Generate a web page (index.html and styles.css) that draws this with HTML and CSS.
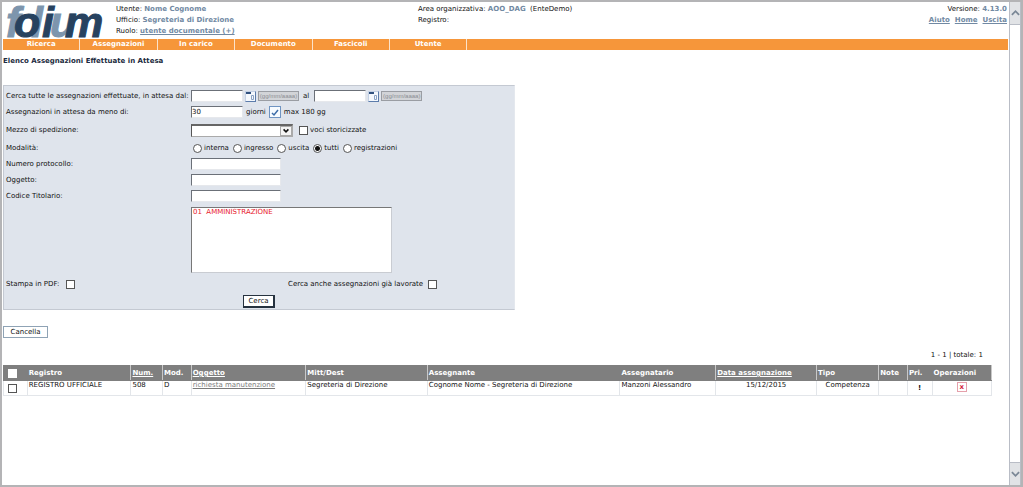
FILE: index.html
```html
<!DOCTYPE html>
<html lang="it">
<head>
<meta charset="utf-8">
<title>Elenco Assegnazioni Effettuate in Attesa</title>
<link rel="stylesheet" href="styles.css">
</head>
<body>
<div class="frame">
<div class="page">
  <header class="header">
    <svg class="logo" viewBox="0 0 101 34" role="img" aria-label="folium">
      <g class="logo-back"><text x="3" y="33">f</text><text x="28" y="33">l</text><text x="47" y="33">u</text></g>
      <g class="logo-front"><text x="11" y="33">o</text><text x="39" y="33">i</text><text x="62" y="33">m</text></g>
    </svg>
    <div class="user">
      <div>Utente: <b>Nome Cognome</b></div>
      <div>Ufficio: <b>Segreteria di Direzione</b></div>
      <div>Ruolo: <a href="#">utente documentale (+)</a></div>
    </div>
    <div class="area">
      <div>Area organizzativa: <b>AOO_DAG</b>&nbsp; (EnteDemo)</div>
      <div>Registro:</div>
    </div>
    <div class="version">
      <div>Versione: <b>4.13.0</b></div>
      <div class="links"><a href="#">Aiuto</a><a href="#">Home</a><a href="#">Uscita</a></div>
    </div>
  </header>
  <nav class="nav">
    <a href="#">Ricerca</a><a href="#">Assegnazioni</a><a href="#">In carico</a><a href="#">Documento</a><a href="#">Fascicoli</a><a href="#">Utente</a>
  </nav>
  <h1 class="title">Elenco Assegnazioni Effettuate in Attesa</h1>

  <form class="panel">
    <div class="row first">
      <label for="dal">Cerca tutte le assegnazioni effettuate, in attesa dal:</label>
      <div class="fields dates">
        <input class="field short" id="dal" type="text">
        <button class="cal" type="button" aria-label="Calendario"><svg viewBox="0 0 9 9"><path class="cal-bar" d="M0 0h5v2h-5z"/><path class="cal-day" d="M5.500 3.500h2v4h-2z"/></svg></button>
        <span class="hint">(gg/mm/aaaa)</span>
        <label class="to" for="al">al</label>
        <input class="field short" id="al" type="text">
        <button class="cal" type="button" aria-label="Calendario"><svg viewBox="0 0 9 9"><path class="cal-bar" d="M0 0h5v2h-5z"/><path class="cal-day" d="M5.500 3.500h2v4h-2z"/></svg></button>
        <span class="hint">(gg/mm/aaaa)</span>
      </div>
    </div>
    <div class="row">
      <label for="giorni">Assegnazioni in attesa da meno di:</label>
      <div class="fields days">
        <input class="field short" id="giorni" type="text" value="30">
        <span>giorni</span>
        <button class="confirm" type="button" aria-label="Conferma"><svg viewBox="0 0 10 10"><path d="M2 6l2 2L8 3"/></svg></button>
        <span>max 180 gg</span>
      </div>
    </div>
    <div class="row tall">
      <label for="mezzo">Mezzo di spedizione:</label>
      <div class="fields">
        <div class="drop"><select id="mezzo"><option></option></select><svg viewBox="0 0 12 10"><path d="M3 3l3 3 3-3"/></svg></div>
        <label class="choice"><input type="checkbox">voci storicizzate</label>
      </div>
    </div>
    <div class="row" role="radiogroup" aria-labelledby="modalita">
      <span id="modalita">Modalità:</span>
      <div class="fields radios">
        <label class="choice"><input type="radio" name="mod">interna</label>
        <label class="choice"><input type="radio" name="mod">ingresso</label>
        <label class="choice"><input type="radio" name="mod">uscita</label>
        <label class="choice"><input type="radio" name="mod" checked>tutti</label>
        <label class="choice"><input type="radio" name="mod">registrazioni</label>
      </div>
    </div>
    <div class="row"><label for="numero">Numero protocollo:</label><div class="fields"><input class="field" id="numero" type="text"></div></div>
    <div class="row"><label for="oggetto">Oggetto:</label><div class="fields"><input class="field" id="oggetto" type="text"></div></div>
    <div class="row"><label for="codice">Codice Titolario:</label><div class="fields"><input class="field" id="codice" type="text"></div></div>
    <div class="row list">
      <span></span>
      <select class="listbox" size="5" aria-label="Titolario"><option>01&nbsp; AMMINISTRAZIONE</option></select>
    </div>
    <div class="extras">
      <label>Stampa in PDF:<input type="checkbox"></label>
      <label>Cerca anche assegnazioni già lavorate<input type="checkbox"></label>
    </div>
    <div class="submit"><button class="search" type="submit">Cerca</button></div>
  </form>

  <button class="cancel" type="button">Cancella</button>

  <div class="results">
    <p class="count">1 - 1 | totale: 1</p>
    <table>
      <colgroup><col class="c-check"><col class="c-reg"><col class="c-num"><col class="c-mod"><col class="c-ogg"><col class="c-mitt"><col class="c-from"><col class="c-to"><col class="c-date"><col class="c-tipo"><col class="c-note"><col class="c-pri"><col class="c-op"></colgroup>
      <thead><tr>
        <th><input type="checkbox" aria-label="Seleziona tutto"></th><th>Registro</th><th><a href="#">Num.</a></th><th>Mod.</th><th><a href="#">Oggetto</a></th><th>Mitt/Dest</th><th>Assegnante</th><th>Assegnatario</th><th><a href="#">Data assegnazione</a></th><th>Tipo</th><th>Note</th><th>Pri.</th><th>Operazioni</th>
      </tr></thead>
      <tbody><tr>
        <td><input type="checkbox" aria-label="Seleziona riga"></td><td>REGISTRO UFFICIALE</td><td>508</td><td>D</td><td><a href="#">richiesta manutenzione</a></td><td>Segreteria di Direzione</td><td>Cognome Nome - Segreteria di Direzione</td><td>Manzoni Alessandro</td><td class="mid">15/12/2015</td><td class="mid">Competenza</td><td></td><td class="mid pri">!</td><td class="mid"><button class="delete" type="button">x</button></td>
      </tr></tbody>
    </table>
  </div>
</div>
<div class="scroll">
  <button type="button" aria-label="Su"><svg viewBox="0 0 10 8"><path d="M1 6l4-4 4 4"/></svg></button>
  <button type="button" aria-label="Giù"><svg viewBox="0 0 10 8"><path d="M1 2l4 4 4-4"/></svg></button>
</div>
</div>
</body>
</html>
```
FILE: styles.css
```css
* { box-sizing: border-box; }
body {
  margin: 0;
  font: 7px/11px "DejaVu Sans", Verdana, sans-serif;
  color: #111;
  background: #fff;
}
button, input, select { font: inherit; color: inherit; margin: 0; padding: 0; border-radius: 0; }
button svg { display: block; }
.frame {
  display: flex;
  min-height: 100vh;
  border: 2px solid #b4b4b6;
}
.page { flex: 1; min-width: 0; padding: 2px 1px; }

.header { display: flex; align-items: flex-start; height: 35px; }
.header a, .header b { color: #7189a3; font-weight: bold; }
.logo { width: 101px; height: 34px; flex: none; overflow: visible; }
.logo text { font: italic bold 43px "Liberation Sans", Arial, sans-serif; stroke-width: 1; }
.logo-back { fill: #7d95ad; stroke: #7d95ad; }
.logo-front { fill: #27425f; stroke: #27425f; }
.user { width: 314px; padding-left: 12px; }
.area { flex: 1; }
.version { text-align: right; padding-right: 1px; }
.links { display: flex; gap: 5px; justify-content: flex-end; }

.nav { display: flex; height: 11px; background: #f6963a; }
.nav a {
  flex: 0 0 7.7%;
  border-right: 1px solid #fbe3cb;
  color: #fff;
  font-weight: bold;
  text-align: center;
  text-decoration: none;
}
.title { margin: 6px 0 18px; font-size: 7px; line-height: 11px; color: #1c2b40; }

.panel {
  width: 51%;
  max-width: 512px;
  padding: 2px 2px 1px;
  border: 1px solid #c4c9d2;
  border-right-color: #e4e8ee;
  background: #dfe4ec;
}
.row { display: grid; grid-template-columns: 185px 1fr; align-items: center; min-height: 16px; }
.row.tall { min-height: 20px; }
.fields { display: flex; align-items: center; gap: 3px; height: 16px; }
.fields.dates { gap: 2px; }
.field {
  width: 90px;
  height: 12px;
  border: 1px solid #e6e8ec;
  border-top-color: #6b7078;
  border-left-color: #6b7078;
  background: #fff;
}
.field.short { width: 52px; }
.cal { width: 11px; height: 11px; border: 1px solid #c3d0e4; border-right-color: #5c7cab; border-bottom-color: #5c7cab; background: #f4f8fd; }
.cal svg { width: 9px; height: 9px; }
.cal-bar { fill: #30517f; }
.cal-day { fill: none; stroke: #8ba3c4; }
.hint { width: 41px; border: 1px solid #9a9da3; background: #d2d4d8; color: #8a8d93; font: 6px/8px "Liberation Sans", Arial, sans-serif; text-align: center; }
.to { margin: 0 3px 0 2px; }
.confirm { width: 12px; height: 12px; border: 1px solid #6f94c2; background: #f7fbff; }
.confirm svg { width: 10px; height: 10px; }
.confirm path { fill: none; stroke: #3c6ca8; stroke-width: 1.500; }
.drop { position: relative; width: 102px; height: 13px; }
.drop select { appearance: none; display: block; width: 100%; height: 13px; background: #fff; border: 1px solid #aaa; border-top: 2px solid #666; border-left-color: #555; }
.drop svg { position: absolute; right: 1px; top: 2px; width: 12px; height: 10px; border: 1px solid #aaa; background: #f5f5f5; pointer-events: none; }
.drop path { fill: none; stroke: #111; stroke-width: 2; }
.choice { display: flex; align-items: center; gap: 2px; }
.drop + .choice { margin-left: 3px; }
.radios { gap: 4px; padding-left: 2px; }
input[type="checkbox"], input[type="radio"] {
  appearance: none;
  display: block;
  flex: none;
  width: 9px;
  height: 9px;
  border: 1px solid #555;
  background: #fff;
}
input[type="radio"] { border-radius: 50%; }
input[type="radio"]:checked { background: radial-gradient(circle, #111 0 2px, #fff 3px); }
.row.list { padding-top: 3px; }
.listbox {
  appearance: none;
  width: 201px;
  height: 66px;
  padding: 0 1px;
  border: 1px solid #c9ccd2;
  border-top-color: #777;
  border-left-color: #777;
  background: #fff;
  color: #e8202c;
  overflow: hidden;
}
.listbox option { padding: 0; min-height: 0; line-height: 11px; }
.extras { display: flex; align-items: center; height: 22px; }
.extras label { display: flex; align-items: center; gap: 5px; }
.extras label:first-child { width: 282px; gap: 7px; }
.submit { text-align: center; line-height: 0; }
.search { height: 13px; padding: 0 4px; line-height: 9px; border: 1px solid #26323f; border-width: 1px 2px 2px 1px; background: #fff; }
.cancel { display: block; margin-top: 16px; width: 45px; height: 12px; line-height: 10px; border: 1px solid #8fa3b5; background: #fff; }

.results { width: 98.4%; padding-top: 12px; }
.count { margin: 0 9px 4px; text-align: right; }
table { width: 100%; table-layout: fixed; border-collapse: collapse; }
th, td { padding: 0 0 0 1px; border: 1px solid #e3e6ea; text-align: left; vertical-align: top; white-space: nowrap; }
th { height: 15px; background: #7f7f7f; color: #fff; line-height: 12px; border-color: #7f7f7f #c8c8c8; vertical-align: middle; }
th:first-child, th:nth-child(2), th:nth-child(8), th:nth-child(13) { border-left-color: #7f7f7f; }
th:first-child, th:nth-child(7), th:nth-child(12) { border-right-color: #7f7f7f; }
th a { color: #fff; }
td { height: 15px; line-height: 9px; }
td a { color: #7a7a7a; }
th:first-child, td:first-child { padding-left: 4px; }
td:first-child { vertical-align: bottom; padding-bottom: 2px; }
th input[type="checkbox"] { border-color: #fff; }
.mid { text-align: center; padding: 0; }
.pri { font-weight: bold; vertical-align: middle; }
.delete { display: block; margin: 1px auto 0; width: 10px; height: 10px; border: 1px solid #e5a0ab; background: #fff; color: #d41f3f; font-weight: bold; line-height: 7px; }
.c-check { width: 2.400%; }
.c-reg { width: 10.500%; }
.c-num { width: 3.200%; }
.c-mod { width: 2.900%; }
.c-ogg { width: 11.600%; }
.c-mitt { width: 12.300%; }
.c-from { width: 19.500%; }
.c-to { width: 9.700%; }
.c-date { width: 10.200%; }
.c-tipo { width: 6.300%; }
.c-note { width: 2.900%; }
.c-pri { width: 2.500%; }
.c-op { width: 6%; }

.scroll {
  display: flex;
  flex-direction: column;
  justify-content: space-between;
  width: 12px;
  border: 1px solid #b9bdc6;
  border-width: 0 1px;
}
.scroll button { display: grid; place-items: center; height: 23px; border: 0; background: #e1e3e6; }
.scroll button:first-child { border-bottom: 1px solid #b9bdc6; }
.scroll button:last-child { border-top: 1px solid #b9bdc6; }
.scroll svg { width: 9px; height: 8px; }
.scroll path { fill: none; stroke: #7a8796; stroke-width: 2; }
```
